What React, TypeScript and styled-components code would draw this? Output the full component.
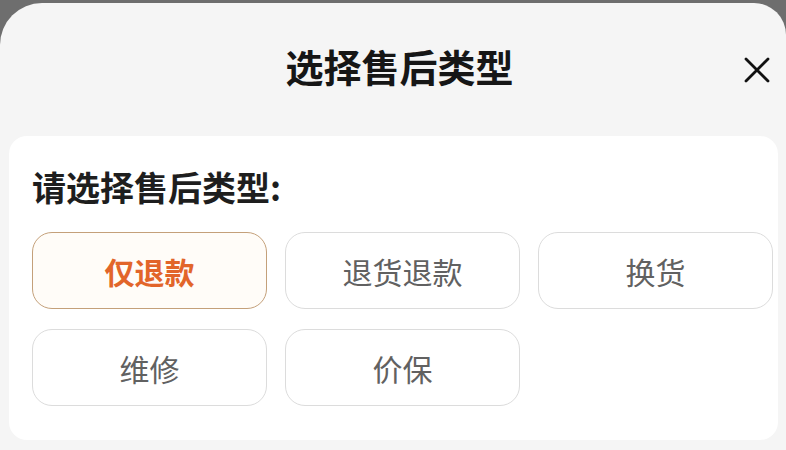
import styled, { createGlobalStyle } from 'styled-components';

const options = ['仅退款', '退货退款', '换货', '维修', '价保'];

const GlobalStyle = createGlobalStyle`
    html, body {
        margin: 0;
        padding: 0;
        background: #6e6e6e;
        font-family: "Noto Sans CJK SC", "Noto Sans", sans-serif;
    }
`;

export default function App() {
    const selected = 0;
    return (
        <>
            <GlobalStyle />
            <Sheet>
                <Header>
                    <Title>选择售后类型</Title>
                    <CloseButton aria-label="关闭">
                        <svg width="28" height="28" viewBox="0 0 28 28">
                            <path d="M3 3 L25 25 M25 3 L3 25" stroke="#111" strokeWidth="2.8" strokeLinecap="round" />
                        </svg>
                    </CloseButton>
                </Header>
                <Card>
                    <Label>请选择售后类型:</Label>
                    <OptionGrid>
                        {options.map((opt, index) => (
                            <Option key={opt} $active={index === selected}>{opt}</Option>
                        ))}
                    </OptionGrid>
                </Card>
            </Sheet>
        </>
    );
}

const Sheet = styled.div`
    margin-top: 3px;
    height: 447px;
    background: #f5f5f5;
    border-radius: 42px 32px 0 0;
    box-sizing: border-box;
    padding: 0 8px 0 9px;
    overflow: hidden;
`;

const Header = styled.div`
    position: relative;
    height: 133px;
    display: flex;
    align-items: center;
    justify-content: center;
    padding-bottom: 8px;
    box-sizing: border-box;
`;

const Title = styled.div`
    font-size: 38px;
    font-weight: 700;
    color: #161616;
    margin-left: 12px;
    line-height: 50px;
`;

const CloseButton = styled.div`
    position: absolute;
    right: 7px;
    top: 53px;
    width: 28px;
    height: 28px;
    display: flex;
`;

const Card = styled.div`
    background: #ffffff;
    border-radius: 18px;
    padding: 30px 0 34px 23px;
`;

const Label = styled.div`
    font-size: 34px;
    font-weight: 700;
    color: #1e1e1e;
    line-height: 42px;
    margin-bottom: 24px;
`;

const OptionGrid = styled.div`
    display: grid;
    grid-template-columns: repeat(3, 235px);
    column-gap: 18px;
    row-gap: 20px;
`;

const Option = styled.div<{ $active: boolean }>`
    height: 77px;
    box-sizing: border-box;
    display: flex;
    align-items: center;
    justify-content: center;
    border-radius: 20px;
    border: 1.5px solid ${(p) => (p.$active ? '#c4a07a' : '#dcdcdc')};
    background: ${(p) => (p.$active ? '#fffcf8' : '#ffffff')};
    color: ${(p) => (p.$active ? '#e2652a' : '#616161')};
    font-size: 30px;
    font-weight: ${(p) => (p.$active ? 700 : 400)};
`;
